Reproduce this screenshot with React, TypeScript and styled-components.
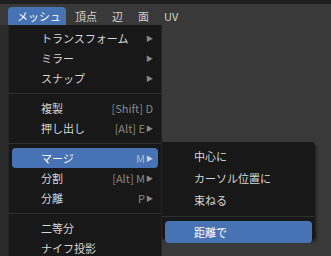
import { createGlobalStyle } from 'styled-components';
import styled from 'styled-components';

const GlobalStyle = createGlobalStyle`
  html, body {
    margin: 0;
    padding: 0;
    background: #393939;
  }
  * { box-sizing: border-box; }
`;

const font = `"Noto Sans CJK JP", "Noto Sans", "DejaVu Sans", sans-serif`;

const Screen = styled.div`
  position: relative;
  width: 331px;
  height: 256px;
  overflow: hidden;
  background: #393939;
  font-family: ${font};
  font-size: 11px;
`;

const TopStrip = styled.div`
  height: 4px;
  background: #1f1f1f;
`;

const Header = styled.div`
  height: 21px;
  display: flex;
  align-items: flex-end;
  padding-left: 8px;
  background: #393939;
`;

const HeaderItem = styled.div<{ $active?: boolean }>`
  height: 18px;
  padding: ${(p) => (p.$active ? '0 5px 0 9px' : '0 6px 0 9px')};
  display: flex;
  align-items: center;
  color: ${(p) => (p.$active ? '#ffffff' : '#d2d2d2')};
  background: ${(p) => (p.$active ? '#4772b3' : 'transparent')};
  border-radius: 4px 4px 0 0;
`;

const Body = styled.div`
  display: flex;
  height: 231px;
`;

const LeftStrip = styled.div`
  width: 8px;
  background: #2b2b2b;
`;

const Menu = styled.div`
  position: absolute;
  left: 8px;
  top: 25px;
  width: 154px;
  height: 240px;
  background: #181818;
  border-left: 1px solid #242424;
  border-right: 1px solid #242424;
  padding: 3px 3px 0 3px;
`;

const Row = styled.div<{ $active?: boolean }>`
  height: 20px;
  display: flex;
  align-items: center;
  padding: 0 5px 0 29px;
  border-radius: 4px;
  color: ${(p) => (p.$active ? '#ffffff' : '#d6d6d6')};
  background: ${(p) => (p.$active ? '#4772b3' : 'transparent')};
`;

const Label = styled.span`
  flex: 1;
  white-space: nowrap;
`;

const Shortcut = styled.span<{ $active?: boolean }>`
  color: ${(p) => (p.$active ? '#a9bcd9' : '#888888')};
  white-space: nowrap;
`;

const Arrow = styled.span<{ $active?: boolean }>`
  font-size: 7px;
  color: ${(p) => (p.$active ? '#c6d3e8' : '#888888')};
  margin-left: 1px;
`;

const Separator = styled.div`
  height: 10px;
  margin: 0 -3px;
  display: flex;
  align-items: center;
  &::after {
    content: '';
    flex: 1;
    height: 1px;
    background: #2e2e2e;
  }
`;

const SubMenu = styled.div`
  position: absolute;
  left: 162px;
  top: 142px;
  width: 153px;
  height: 98px;
  background: #181818;
  border-radius: 0 4px 4px 4px;
  box-shadow: 2px 2px 2px rgba(0, 0, 0, 0.35);
  padding: 3px 3px 0 3px;
`;

const SubRow = styled.div<{ $active?: boolean }>`
  height: 22px;
  display: flex;
  align-items: center;
  padding-left: 29px;
  border-radius: 4px;
  color: ${(p) => (p.$active ? '#ffffff' : '#d6d6d6')};
  background: ${(p) => (p.$active ? '#4772b3' : 'transparent')};
`;

type Item =
  | { sep: true }
  | { label: string; shortcut?: string; arrow?: boolean; active?: boolean };

const items: Item[] = [
  { label: 'トランスフォーム', arrow: true },
  { label: 'ミラー', arrow: true },
  { label: 'スナップ', arrow: true },
  { sep: true },
  { label: '複製', shortcut: '[Shift] D' },
  { label: '押し出し', shortcut: '[Alt] E', arrow: true },
  { sep: true },
  { label: 'マージ', shortcut: 'M', arrow: true, active: true },
  { label: '分割', shortcut: '[Alt] M', arrow: true },
  { label: '分離', shortcut: 'P', arrow: true },
  { sep: true },
  { label: '二等分' },
  { label: 'ナイフ投影' },
];

export default function App() {
  return (
    <>
      <GlobalStyle />
      <Screen>
        <TopStrip />
        <Header>
          <HeaderItem $active>メッシュ</HeaderItem>
          <HeaderItem>頂点</HeaderItem>
          <HeaderItem>辺</HeaderItem>
          <HeaderItem>面</HeaderItem>
          <HeaderItem>UV</HeaderItem>
        </Header>
        <Body>
          <LeftStrip />
        </Body>
        <Menu>
          {items.map((it, i) =>
            'sep' in it ? (
              <Separator key={i} />
            ) : (
              <Row key={i} $active={it.active}>
                <Label>{it.label}</Label>
                {it.shortcut && <Shortcut $active={it.active}>{it.shortcut}</Shortcut>}
                {it.arrow && <Arrow $active={it.active}>▶</Arrow>}
              </Row>
            )
          )}
        </Menu>
        <SubMenu>
          <SubRow>中心に</SubRow>
          <SubRow>カーソル位置に</SubRow>
          <SubRow>束ねる</SubRow>
          <Separator />
          <SubRow $active>距離で</SubRow>
        </SubMenu>
      </Screen>
    </>
  );
}
